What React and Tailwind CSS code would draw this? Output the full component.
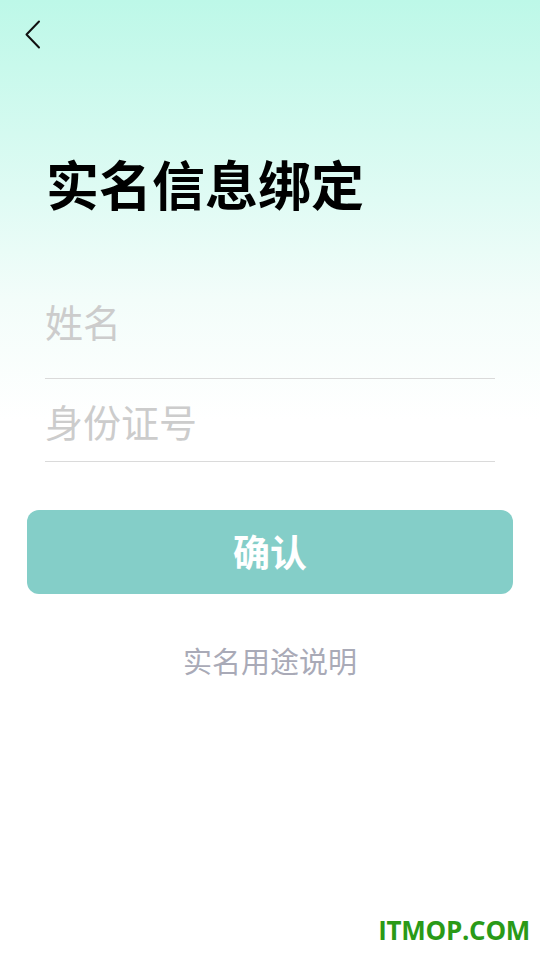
import React from 'react';

const cjk = { fontFamily: '"Noto Sans CJK SC", "Noto Sans", sans-serif' };

export default function App() {
    return (
        <div
            className="relative w-[540px] h-[960px] overflow-hidden bg-[linear-gradient(180deg,#bdf8e8_0%,#e0fbf4_200px,#f3fdfa_300px,#ffffff_420px)]"
            style={cjk}
        >
            {/* back */}
            <div className="pt-[20px] pl-[24px]">
                <svg width="18" height="29" viewBox="0 0 18 29" fill="none">
                    <path d="M15 1.5 L2.5 14.5 L15 27.5" stroke="#111" strokeWidth="2" strokeLinecap="round" strokeLinejoin="round" />
                </svg>
            </div>

            <h1 className="mt-[108px] pl-[46px] text-[53px] leading-none font-bold text-black">
                实名信息绑定
            </h1>

            <div className="mx-[45px] mt-[91px]">
                <div className="border-b border-[#dadada] pb-[37px]">
                    <input
                        className="block w-full h-[40px] bg-transparent outline-none text-[38px] leading-[40px] text-black placeholder:text-[#cccccc]"
                        placeholder="姓名"
                    />
                </div>
                <div className="border-b border-[#dadada] pt-[22px] pb-[20px]">
                    <input
                        className="block w-full h-[40px] bg-transparent outline-none text-[38px] leading-[40px] text-black placeholder:text-[#cccccc]"
                        placeholder="身份证号"
                    />
                </div>
            </div>

            <div className="px-[27px] mt-[48px]">
                <button className="w-full h-[84px] rounded-[12px] bg-[#84cec8] text-white text-[37px] font-bold flex items-center justify-center">
                    确认
                </button>
            </div>

            <p className="mt-[48px] text-center text-[29px] leading-[36px] text-[#a9aab7]">
                实名用途说明
            </p>

            <div className="absolute right-[10px] bottom-[10px] text-[26px] font-bold text-[#2a9a17] tracking-[-0.3px] font-['Open_Sans',sans-serif]">
                ITMOP.COM
            </div>
        </div>
    );
}
